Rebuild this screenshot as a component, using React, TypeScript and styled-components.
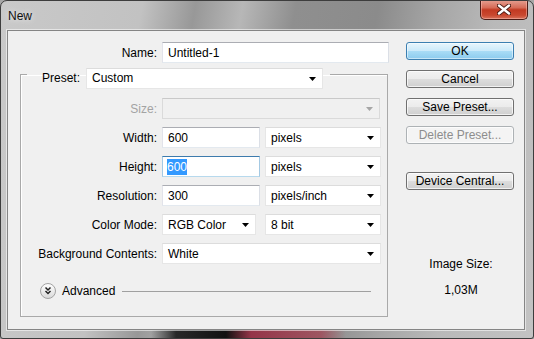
import React from "react";
import styled, { createGlobalStyle } from "styled-components";

const GlobalStyle = createGlobalStyle`
  html, body {
    margin: 0;
    padding: 0;
    background: #a7a7a7;
  }
  body {
    font-family: "Liberation Sans", Arial, sans-serif;
    font-size: 12px;
    color: #000;
  }
  * {
    box-sizing: border-box;
  }
`;

interface IField {
  $w: number;
  $disabled?: boolean;
  $focused?: boolean;
}

interface ILabel {
  $w: number;
  $disabled?: boolean;
}

interface IButton {
  $default?: boolean;
  $disabled?: boolean;
}

const Dropdown: React.FC<{ value?: string; width: number; disabled?: boolean }> = ({
  value,
  width,
  disabled,
}) => (
  <DropBox $w={width} $disabled={disabled}>
    <FieldText>{value}</FieldText>
    <svg width="7" height="4" viewBox="0 0 7 4">
      <polygon points="0,0 7,0 3.5,4" fill={disabled ? "#a6a6a6" : "#000"} />
    </svg>
  </DropBox>
);

const App: React.FC = () => {
  return (
    <>
      <GlobalStyle />
      <Window>
        <TitleBar>
          <TitleText>New</TitleText>
          <CloseButton>
            <svg width="14" height="11" viewBox="0 0 14 11">
              <path
                d="M2 1.5 L12 9.5 M12 1.5 L2 9.5"
                stroke="#4a1a12"
                strokeWidth="4.2"
                strokeLinecap="round"
              />
              <path
                d="M2 1.5 L12 9.5 M12 1.5 L2 9.5"
                stroke="#fff"
                strokeWidth="2.4"
                strokeLinecap="round"
              />
            </svg>
          </CloseButton>
        </TitleBar>

        <Client>
          <LeftCol>
            <Row>
              <Label $w={149}>Name:</Label>
              <TextBox $w={227}>
                <FieldText>Untitled-1</FieldText>
              </TextBox>
            </Row>

            <Group>
              <Legend>
                <LegendLabel>Preset:</LegendLabel>
                <Dropdown value="Custom" width={237} />
              </Legend>

              <Rows>
                <Row>
                  <Label $w={136} $disabled>
                    Size:
                  </Label>
                  <Dropdown width={218} disabled />
                </Row>
                <Row>
                  <Label $w={136}>Width:</Label>
                  <TextBox $w={98}>
                    <FieldText>600</FieldText>
                  </TextBox>
                  <Spacer />
                  <Dropdown value="pixels" width={116} />
                </Row>
                <Row>
                  <Label $w={136}>Height:</Label>
                  <TextBox $w={98} $focused>
                    <Selection>600</Selection>
                  </TextBox>
                  <Spacer />
                  <Dropdown value="pixels" width={116} />
                </Row>
                <Row>
                  <Label $w={136}>Resolution:</Label>
                  <TextBox $w={98}>
                    <FieldText>300</FieldText>
                  </TextBox>
                  <Spacer />
                  <Dropdown value="pixels/inch" width={116} />
                </Row>
                <Row>
                  <Label $w={136}>Color Mode:</Label>
                  <Dropdown value="RGB Color" width={94} />
                  <Spacer $w={9} />
                  <Dropdown value="8 bit" width={116} />
                </Row>
                <Row>
                  <Label $w={136}>Background Contents:</Label>
                  <Dropdown value="White" width={219} />
                </Row>
              </Rows>

              <AdvancedRow>
                <svg width="16" height="16" viewBox="0 0 16 16">
                  <defs>
                    <linearGradient id="adv" x1="0" y1="0" x2="0" y2="1">
                      <stop offset="0" stopColor="#ffffff" />
                      <stop offset="1" stopColor="#d9d9d9" />
                    </linearGradient>
                  </defs>
                  <circle cx="8" cy="8" r="7.5" fill="url(#adv)" stroke="#a2a2a2" />
                  <path
                    d="M5.5 4.5 L8 7 L10.5 4.5 M5.5 8 L8 10.5 L10.5 8"
                    fill="none"
                    stroke="#222"
                    strokeWidth="1.5"
                  />
                </svg>
                <AdvancedText>Advanced</AdvancedText>
                <Rule />
              </AdvancedRow>
            </Group>
          </LeftCol>

          <RightCol>
            <Button $default>OK</Button>
            <Button>Cancel</Button>
            <Button>Save Preset...</Button>
            <Button $disabled>Delete Preset...</Button>
            <Button>Device Central...</Button>
            <SizeInfo>
              <span>Image Size:</span>
              <span>1,03M</span>
            </SizeInfo>
          </RightCol>
        </Client>
      </Window>
    </>
  );
};

const Window = styled.div`
  width: 534px;
  height: 339px;
  display: flex;
  flex-direction: column;
  border: 1px solid #3d3d3d;
  border-radius: 7px 7px 3px 3px;
  overflow: hidden;
  background: linear-gradient(
        to right,
        rgba(0, 0, 0, 0) 0,
        rgba(0, 0, 0, 0) 150px,
        rgba(25, 25, 25, 0.9) 175px,
        rgba(10, 10, 10, 0.95) 225px,
        rgba(150, 30, 55, 0.8) 250px,
        rgba(170, 50, 70, 0.6) 320px,
        rgba(0, 0, 0, 0) 345px
      )
      left bottom / 100% 8px no-repeat,
    linear-gradient(
      100deg,
      #c9c9c9 0%,
      #c2c2c2 24%,
      #989898 33%,
      #b7b7b7 41%,
      #8f8f8f 50%,
      #8b8b8b 64%,
      #a6a6a6 74%,
      #b9b9b9 84%,
      #c3c3c3 100%
    );
`;

const TitleBar = styled.div`
  height: 29px;
  display: flex;
  align-items: flex-start;
  padding-left: 7px;
`;

const TitleText = styled.span`
  margin-top: 8px;
  font-size: 12px;
  color: #111;
  text-shadow: 0 0 6px rgba(255, 255, 255, 0.8);
`;

const CloseButton = styled.div`
  margin-left: auto;
  margin-right: 5px;
  margin-top: -1px;
  width: 48px;
  height: 20px;
  display: flex;
  align-items: center;
  justify-content: center;
  border: 1px solid #4b1c16;
  border-top: none;
  border-radius: 0 0 5px 5px;
  background: linear-gradient(
    #e6a193 0%,
    #d66c58 40%,
    #c23a22 52%,
    #c9482f 80%,
    #d8735c 100%
  );
  box-shadow: inset 0 0 0 1px rgba(255, 200, 190, 0.45);
`;

const Client = styled.div`
  height: 300px;
  margin: 0 8px 8px 6px;
  display: flex;
  padding: 11px 9px 0 0;
  background: #f0f0f0;
  border: 1px solid #858585;
  box-shadow: 0 0 0 1px rgba(255, 255, 255, 0.55);
`;

const LeftCol = styled.div`
  width: 388px;
  display: flex;
  flex-direction: column;
`;

const RightCol = styled.div`
  width: 108px;
  margin-left: 10px;
  display: flex;
  flex-direction: column;
  gap: 10px;
`;

const Row = styled.div`
  display: flex;
  align-items: center;
  height: 21px;
`;

const Label = styled.span<ILabel>`
  width: ${(p) => p.$w}px;
  margin-right: 5px;
  text-align: right;
  white-space: nowrap;
  color: ${(p) => (p.$disabled ? "#a3a3a3" : "#000")};
`;

const Spacer = styled.span<{ $w?: number }>`
  width: ${(p) => p.$w ?? 5}px;
  flex: none;
`;

const TextBox = styled.div<IField>`
  width: ${(p) => p.$w}px;
  height: 21px;
  flex: none;
  display: flex;
  align-items: center;
  padding-left: 5px;
  background: #fff;
  border: 1px solid;
  border-color: ${(p) =>
    p.$focused
      ? "#3d7bad #a4c9e3 #b7d9ed #a4c9e3"
      : "#abadb3 #dbdfe6 #e3e9ef #e2e3ea"};
`;

const DropBox = styled.div<IField>`
  width: ${(p) => p.$w}px;
  height: 21px;
  flex: none;
  display: flex;
  align-items: center;
  justify-content: space-between;
  padding: 0 6px 0 5px;
  background: ${(p) => (p.$disabled ? "#f0f0f0" : "#fff")};
  border: 1px solid;
  border-color: ${(p) =>
    p.$disabled ? "#c9c9c9 #dadada #dadada #dadada" : "#dcdcdc #e6e6e6 #e6e6e6 #e6e6e6"};
`;

const FieldText = styled.span`
  white-space: nowrap;
`;

const Selection = styled.span`
  background: #3399ff;
  color: #fff;
  padding: 1px 0;
  margin-left: -1px;
`;

const Group = styled.fieldset`
  width: 368px;
  margin: 5px 0 0 12px;
  padding: 0 0 17px 0;
  border: 1px solid #a9a9a9;
  box-shadow: inset 1px 1px 0 #fff;
`;

/* the legend box is kept short so the border meets it 6px down; the select hangs below */
const Legend = styled.legend`
  margin: 0 0 0 6px;
  padding: 0 7px 0 15px;
  display: flex;
  align-items: flex-start;
  height: 13px;
  line-height: 21px;
`;

const LegendLabel = styled.span`
  width: 44px;
  height: 21px;
`;

const Rows = styled.div`
  display: flex;
  flex-direction: column;
  gap: 8px;
  padding-top: 17px;
`;

const AdvancedRow = styled.div`
  display: flex;
  align-items: center;
  margin-top: 19px;
  padding: 0 16px 0 19px;
  height: 16px;
`;

const AdvancedText = styled.span`
  margin-left: 6px;
  margin-right: 7px;
`;

const Rule = styled.div`
  flex: 1;
  height: 1px;
  background: #a0a0a0;
`;

const Button = styled.div<IButton>`
  height: 18px;
  flex: none;
  display: flex;
  align-items: center;
  justify-content: center;
  border-radius: 3px;
  border: 1px solid
    ${(p) => (p.$default ? "#3c7fb1" : p.$disabled ? "#adb2b5" : "#707070")};
  color: ${(p) => (p.$disabled ? "#8d8d8d" : "#000")};
  background: ${(p) =>
    p.$default
      ? "linear-gradient(#e8f6fd 0%, #cbeafa 50%, #a9dcf6 51%, #8ccbee 100%)"
      : p.$disabled
      ? "#f4f4f4"
      : "linear-gradient(#f2f2f2 0%, #ebebeb 50%, #dddddd 51%, #cfcfcf 100%)"};
  box-shadow: inset 0 0 0 1px
    ${(p) => (p.$default ? "rgba(255,255,255,0.5)" : "rgba(255,255,255,0.7)")};

  &:nth-child(5) {
    margin-top: 18px;
  }
`;

const SizeInfo = styled.div`
  margin-top: 57px;
  display: flex;
  flex-direction: column;
  align-items: center;
  gap: 12px;
  padding-left: 2px;
`;

export default App;
